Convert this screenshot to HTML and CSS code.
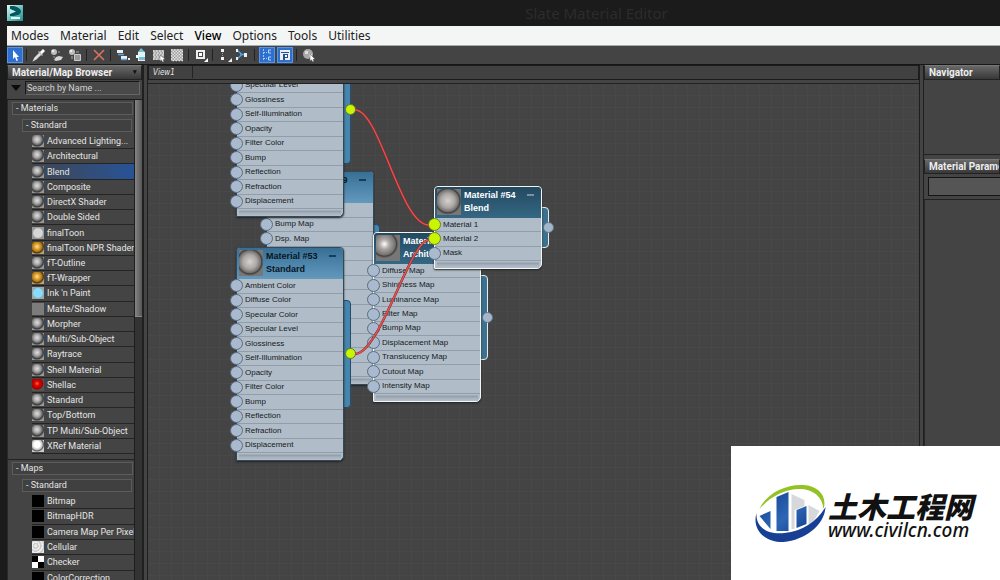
FILE: index.html
```html
<!DOCTYPE html>
<html lang="en">
<head>
<meta charset="utf-8">
<title>Slate Material Editor</title>
<link rel="stylesheet" href="styles.css">
</head>
<body>
<div class="window">
  <header class="titlebar">
    <svg class="app-icon" viewBox="0 0 16 16" aria-hidden="true">
      <defs><linearGradient id="app" x1="0" y1="0" x2="1" y2="1"><stop offset="0" stop-color="#e6fbf8"/><stop offset=".5" stop-color="#6cc6c2"/><stop offset="1" stop-color="#1c8f92"/></linearGradient></defs>
      <path fill="url(#app)" d="M0 0h16v16H0z"/><path fill="#07585e" d="M3 1h4q7 2 7 5.500T7 11H3V8.500l5-2L3 4z"/><path fill="#bdf0ec" d="M3 4l6 2.500L3 9z"/><path fill="#eafffd" d="M4 12h9v2H4z"/>
    </svg>
    <h1 class="window-title">Slate Material Editor</h1>
  </header>
  <nav class="menubar">
    <button>Modes</button><button>Material</button><button>Edit</button><button>Select</button><button class="strong">View</button><button>Options</button><button>Tools</button><button>Utilities</button>
  </nav>
  <div class="toolbar">
    <button class="tool on" aria-label="Select"><svg viewBox="0 0 16 16"><path fill="#fff" d="M6 3v9l2-2 1.500 4 1.500-.7L9.500 10H12z"/></svg></button>
    <i class="sep"></i>
    <button class="tool" aria-label="Pick material"><svg viewBox="0 0 16 16"><path stroke="#ddd" stroke-width="1.500" fill="none" d="M3 13l1-2 5-5 1 1-5 5z"/><path stroke="#fff" stroke-width="3" d="M9 7l4-4"/><path stroke="#bbb" stroke-width="1.500" d="M7.500 4.500l4 4"/></svg></button>
    <button class="tool" aria-label="Put material to scene"><svg viewBox="0 0 16 16"><circle cx="5" cy="5" r="3" fill="#bdbdbd"/><circle cx="4" cy="4" r="1" fill="#fff"/><path d="M9 5h2M5 9v2" stroke="#999"/><path fill="#d6d6d6" d="M7 10l3-1 4 1-2 3-5 1-2-1z"/></svg></button>
    <button class="tool" aria-label="Assign material to selection"><svg viewBox="0 0 16 16"><circle cx="5" cy="5" r="3" fill="#bdbdbd"/><circle cx="4" cy="4" r="1" fill="#fff"/><path d="M9 5h3M5 9v3" stroke="#aaa"/><path fill="#999" stroke="#ccc" d="M7.500 7.500h6v6h-6z"/></svg></button>
    <i class="sep"></i>
    <button class="tool" aria-label="Delete selected"><svg viewBox="0 0 16 16"><path stroke="#d9705f" stroke-width="1.700" d="M3 3l10 10M13 3L3 13"/></svg></button>
    <i class="sep"></i>
    <button class="tool" aria-label="Move children"><svg viewBox="0 0 16 16"><path fill="#eee" d="M2 3h6v3H2zM6 9h6v3H6zM13 11h2v2h-2z"/><path stroke="#5aa5e6" stroke-width="1.500" fill="none" d="M3 7.500h6M6 12.500h6"/></svg></button>
    <button class="tool" aria-label="Hide unused nodeslots"><svg viewBox="0 0 16 16"><path fill="#dff4f8" d="M5 5h7v9H5z"/><path fill="#78bed0" d="M8 1l4 4H5zM6 10h6v3H6z"/><path fill="#fff" d="M3 8h2v3H3z"/></svg></button>
    <button class="tool" aria-label="Show map in viewport"><svg viewBox="0 0 16 16"><path fill="#a5a5a5" d="M2 3h11v10H2z"/><path stroke="#e2e2e2" stroke-width="1.500" stroke-dasharray="1.500 1.500" d="M2 4h11M3 6h10M2 8h11M3 10h7M2 12h7"/><path fill="#fff" stroke="#555" stroke-width=".5" d="M9 8l5 4-2 .5 1 2-1.500.5-1-2L9 14z"/></svg></button>
    <button class="tool" aria-label="Show background"><svg viewBox="0 0 16 16"><path fill="#999" d="M2 2h12v12H2z"/><path stroke="#e6e6e6" stroke-width="1.300" stroke-dasharray="1.500 1.500" d="M2 3h12M3.500 4.500H14M2 6h12M3.500 7.500H14M2 9h12M3.500 10.500H14M2 12h12M3.500 13.500H14"/></svg></button>
    <i class="sep"></i>
    <button class="tool" aria-label="Material ID channel"><svg viewBox="0 0 16 16"><path fill="#eee" d="M3 3h9v9H3z"/><path fill="#444" d="M5 5h5v5H5z"/><path fill="#fff" d="M6 6h3v3H6zM15 11v4h-4z"/></svg></button>
    <i class="sep"></i>
    <button class="tool" aria-label="Lay out all"><svg viewBox="0 0 16 16"><path fill="#f2f2f2" d="M4 2h3v3H4zM4 10h3v3H4zM15 11v4h-4z"/><path stroke="#aaa" stroke-dasharray="1 1" d="M5.500 6v3"/></svg></button>
    <button class="tool" aria-label="Lay out children"><svg viewBox="0 0 16 16"><path stroke="#4c9fe0" stroke-width="1.500" fill="none" d="M2 3l5 4.500L2 12M5 7.500h5"/><path fill="#eee" d="M1 2h2v3H1zM1 10h2v3H1zM9 6h3v4H9z"/></svg></button>
    <i class="sep"></i>
    <button class="tool on" aria-label="Material/Map Browser"><svg viewBox="0 0 16 16"><path stroke="#9cc8ff" fill="none" stroke-dasharray="2 1" d="M4.500 2v11M4 5.500h4M4 11.500h4"/><path stroke="#b8d6fa" fill="none" d="M12 3H9.500v3H12M12 10H9.500v3H12"/></svg></button>
    <button class="tool on" aria-label="Parameter Editor"><svg viewBox="0 0 16 16"><path fill="#eee" d="M3 3h10v10H3z"/><path fill="#234f94" d="M4 5h8v1H4zM6 7h5v4H8v2H6z"/><path fill="#fff" d="M8 8h2v2H8z"/></svg></button>
    <i class="sep"></i>
    <button class="tool" aria-label="Select by material"><svg viewBox="0 0 16 16"><circle cx="7" cy="7" r="5" fill="#a9a9a9"/><path fill="#ddd" d="M4 4h3v3H4zM8 7h3v3H8z"/><path fill="#fff" stroke="#555" stroke-width=".5" d="M9 7l5 5-2 .3 1 2-1.500.5-1-2L9 14z"/></svg></button>
  </div>

  <div class="workspace">
    <aside class="browser">
      <h2 class="panel-head">Material/Map Browser<span class="close">▾</span></h2>
      <div class="search"><span class="arrow"></span><input type="text" aria-label="Search by Name" placeholder="Search by Name ..."></div>
      <div class="browser-body">
        <div class="tree">
          <section class="group">
            <h3 class="group-head">- Materials</h3>
            <h4 class="group-head sub">- Standard</h4>
            <ul class="items materials">
              <li><i class="ball"></i>Advanced Lighting...</li>
              <li><i class="ball"></i>Architectural</li>
              <li class="selected"><i class="ball"></i>Blend</li>
              <li><i class="ball"></i>Composite</li>
              <li><i class="ball"></i>DirectX Shader</li>
              <li><i class="ball"></i>Double Sided</li>
              <li><i class="ball pale"></i>finalToon</li>
              <li><i class="ball gold"></i>finalToon NPR Shader</li>
              <li><i class="ball"></i>fT-Outline</li>
              <li><i class="ball gold"></i>fT-Wrapper</li>
              <li><i class="ball cyan"></i>Ink 'n Paint</li>
              <li><i class="ball flat"></i>Matte/Shadow</li>
              <li><i class="ball"></i>Morpher</li>
              <li><i class="ball"></i>Multi/Sub-Object</li>
              <li><i class="ball"></i>Raytrace</li>
              <li><i class="ball"></i>Shell Material</li>
              <li><i class="ball red"></i>Shellac</li>
              <li><i class="ball"></i>Standard</li>
              <li><i class="ball"></i>Top/Bottom</li>
              <li><i class="ball"></i>TP Multi/Sub-Object</li>
              <li><i class="ball white"></i>XRef Material</li>
            </ul>
          </section>
          <section class="group">
            <h3 class="group-head">- Maps</h3>
            <h4 class="group-head sub">- Standard</h4>
            <ul class="items maps">
              <li><i class="ball black"></i>Bitmap</li>
              <li><i class="ball black"></i>BitmapHDR</li>
              <li><i class="ball black"></i>Camera Map Per Pixel</li>
              <li><i class="ball cells"></i>Cellular</li>
              <li><i class="ball checker"></i>Checker</li>
              <li><i class="ball black"></i>ColorCorrection</li>
            </ul>
          </section>
        </div>
        <div class="scroll"><div class="thumb"></div></div>
      </div>
    </aside>

    <main class="view">
      <div class="tabs"><button class="tab">View1</button></div>
      <div class="canvas">
        <article class="node n49">
          <div class="output tab49"></div>
          <div class="card">
            <header><i class="sample"></i><h5>Material #49</h5><b class="min"></b></header>
            <ul class="twelve"><li></li><li>Bump Map</li><li>Dsp. Map</li><li></li><li></li><li></li><li></li><li></li><li></li><li></li><li></li><li></li></ul>
            <footer></footer>
          </div>
        </article>
        <article class="node n52">
          <div class="output tall"><i class="dot live"></i></div>
          <div class="card">
            <header></header>
            <ul class="twelve"><li></li><li></li><li></li><li>Specular Level</li><li>Glossiness</li><li>Self-Illumination</li><li>Opacity</li><li>Filter Color</li><li>Bump</li><li>Reflection</li><li>Refraction</li><li>Displacement</li></ul>
            <footer></footer>
          </div>
        </article>
        <article class="node n53">
          <div class="output tall"><i class="dot live"></i></div>
          <div class="card">
            <header><i class="sample"></i><h5>Material #53<br>Standard</h5><b class="min"></b></header>
            <ul class="twelve"><li>Ambient Color</li><li>Diffuse Color</li><li>Specular Color</li><li>Specular Level</li><li>Glossiness</li><li>Self-Illumination</li><li>Opacity</li><li>Filter Color</li><li>Bump</li><li>Reflection</li><li>Refraction</li><li>Displacement</li></ul>
            <footer></footer>
          </div>
        </article>
        <article class="node picked arch">
          <div class="output"><i class="dot"></i></div>
          <div class="card">
            <header><i class="sample shiny"></i><h5>Material #50<br>Architectural</h5></header>
            <ul class="nine"><li>Diffuse Map</li><li>Shininess Map</li><li>Luminance Map</li><li>Filter Map</li><li>Bump Map</li><li>Displacement Map</li><li>Translucency Map</li><li>Cutout Map</li><li>Intensity Map</li></ul>
            <footer></footer>
          </div>
        </article>
        <article class="node picked blend">
          <div class="output"><i class="dot"></i></div>
          <div class="card">
            <header><i class="sample"></i><h5>Material #54<br>Blend</h5><b class="min"></b></header>
            <ul class="three"><li class="live">Material 1</li><li class="live">Material 2</li><li>Mask</li></ul>
            <footer></footer>
          </div>
        </article>
        <svg class="wires" width="420" height="330" viewBox="0 0 420 330" aria-hidden="true">
          <g fill="none"><path stroke="#802a2e" stroke-width="2.400" d="M207 26C232 26 252 141 281 141M207 270C232 270 262 156 281 156"/><path stroke="#e8504f" stroke-width="1.400" d="M207 26C232 26 252 141 281 141M207 270C232 270 262 156 281 156"/></g>
        </svg>
      </div>
    </main>

    <aside class="side">
      <h2 class="panel-head">Navigator</h2>
      <div class="navigator"></div>
      <h2 class="panel-head">Material Parameter Editor</h2>
      <div class="param-name"><input type="text" aria-label="Material name"></div>
      <div class="params"></div>
    </aside>
  </div>

  <div class="watermark">
    <svg class="logo" viewBox="0 0 70 58" aria-hidden="true">
      <defs><linearGradient id="blue" x1="0" y1="0" x2="1" y2="1"><stop offset="0" stop-color="#123e91"/><stop offset=".6" stop-color="#2d67b4"/><stop offset="1" stop-color="#153f92"/></linearGradient></defs>
      <path fill="#94c123" d="M4 25C11 9 31 0 48 1c15 1 24 11 20 24C67 13 58 5 44 5 29 5 14 13 4 25z"/>
      <path fill="#d6d8dc" d="M36 10l13 6v6l-10 4v19h-3zM53 21l11 6-8 14h-3z"/>
      <path fill="url(#blue)" d="M21 13l12-5v39H21zM41 26l10-4v18l-10 4zM4 32l11-5v18z"/>
      <path fill="#173f94" d="M1 29c-1 15 12 22 28 20 19-2 33-12 41-26-1 18-20 33-42 35C10 59-4 46 1 29z"/>
    </svg>
    <div class="brand"><strong>土木工程网</strong><a href="#">www.civilcn.com</a></div>
  </div>
</div>
</body>
</html>
```
FILE: styles.css
```css
* { box-sizing: border-box; }
body { margin: 0; background: #1b1b1b; color: #e4e4e4; font: 9px/12px Roboto, sans-serif; }
h1, h2, h3, h4, h5, ul { margin: 0; padding: 0; font-size: inherit; font-weight: normal; }
ul { list-style: none; }
button { border: 0; padding: 0; background: none; color: inherit; font: inherit; }
input { min-width: 0; border-radius: 0; }

.window { position: relative; display: flex; flex-direction: column; height: 100vh; padding-left: 7px; overflow: hidden; }
.titlebar { display: flex; align-items: center; flex: 0 0 26px; }
.app-icon { width: 16px; height: 16px; }
.window-title { flex: 1; padding-left: 170px; text-align: center; color: #2c2c2c; font: 15px/24px "Noto Sans", sans-serif; }
.menubar { display: flex; flex: 0 0 20px; gap: 11px; padding-left: 4px; background: #f4f6f6; border-bottom: 1px solid #aaa; color: #222; font: 12px/19px "Noto Sans", sans-serif; }
.menubar .strong { color: #000; font-weight: 500; }
.toolbar { display: flex; align-items: center; flex: 0 0 19px; gap: 2px; background: #444; border-bottom: 1px solid #171717; }
.tool { width: 16px; height: 16px; }
.tool svg { display: block; width: 16px; height: 16px; }
.tool.on { background: #2d70cf; box-shadow: inset 0 0 0 1px #5495e8; }
.sep { width: 2px; height: 12px; margin: 0 1px; border-left: 1px solid #222; }

.workspace { flex: 1; min-height: 0; display: grid; grid-template-columns: 137px minmax(0, 1fr) 77px; gap: 3px; background: #444; }
.panel-head { display: flex; flex: 0 0 15px; justify-content: space-between; padding: 0 4px; overflow: hidden; white-space: nowrap; background: linear-gradient(#686868, #383838); border: 1px solid #222; border-top-color: #777; color: #eee; font: bold 10px/13px Roboto, sans-serif; }
.close { color: #111; font-size: 7px; }

.browser { display: flex; flex-direction: column; min-height: 0; background: #444; border-right: 2px solid #202020; }
.search { display: flex; align-items: center; flex: 0 0 19px; gap: 4px; padding: 0 2px 4px 4px; }
.arrow { border: 5px solid transparent; border-top: 6px solid #0b0b0b; border-bottom: 0; }
.search input { flex: 1; height: 14px; padding: 0 1px; background: #494949; border: 1px solid #181818; border-right-color: #666; border-bottom-color: #666; color: #ddd; font: inherit; }
.search input::placeholder { color: #d4d4d4; opacity: 1; }
.browser-body { display: flex; flex: 1; min-height: 0; border-top: 1px solid #1c1c1c; }
.tree { flex: 1; min-width: 0; overflow: hidden; border-left: 1px solid #292929; }
.group { padding: 2px 1px 0 4px; border-bottom: 1px solid #222; }
.group-head { height: 13px; padding-left: 3px; border: 1px solid #5c5c5c; background: #404040; line-height: 11px; }
.group-head.sub { margin: 4px 1px 2px 10px; }
.items { display: grid; padding-left: 20px; }
.materials { min-height: 320px; margin-bottom: 5px; }
.maps { min-height: 92px; }
.items li { display: flex; align-items: center; gap: 3px; white-space: nowrap; border-bottom: 1px solid #242424; }
.items .selected { background: linear-gradient(90deg, #404650, #285397); }
.ball { width: 12px; height: 12px; flex: none; background: radial-gradient(circle at 42% 38%, #dedede 0, #aaa 30%, #727272 48%, #383838 62%, #999 76%); }
.ball.pale { background: radial-gradient(circle, #d6d6d6 0 50%, #999 65%); }
.ball.gold { background: radial-gradient(circle at 42% 38%, #ffe49b 0, #d69b2b 30%, #ae761b 48%, #4b3410 62%, #b6a378 76%); }
.ball.cyan { background: radial-gradient(circle, #85dcff 0 52%, #9aa 62%); }
.ball.flat { background: #7c7c7c; }
.ball.red { background: radial-gradient(circle at 42% 38%, #ff6a5a 0, #e00800 22%, #a30000 54%, #555 66%); }
.ball.white { background: radial-gradient(circle at 42% 38%, #fff 0 30%, #bbb 52%, #555 62%, #ccc 74%); }
.ball.black { background: #000; }
.ball.cells { background: repeating-radial-gradient(circle at 30% 40%, #eee 0 1px, #ccc 2px 3px); }
.ball.checker { background: conic-gradient(#fff 25%, #000 0 50%, #fff 0 75%, #000 0); }
.scroll { width: 8px; background: #333; border-left: 1px solid #1e1e1e; }
.thumb { height: 217px; background: linear-gradient(90deg, #858585, #555); border-bottom: 1px solid #888; }

.view { display: flex; flex-direction: column; min-width: 0; min-height: 0; border-left: 1px solid #202020; border-right: 1px solid #1e1e1e; }
.tabs { flex: 0 0 15px; background: #414141; border: 1px solid #1c1c1c; }
.tab { display: block; width: 44px; height: 12px; padding-left: 4px; text-align: left; border-right: 1px solid #222; font: italic 8px/11px "DejaVu Sans Condensed", sans-serif; }
.canvas { position: relative; flex: 1; min-height: 0; margin-top: 3px; overflow: hidden; border-top: 1px solid #222; background: repeating-linear-gradient(#0000 0 11px, #484848 11px 12px), repeating-linear-gradient(90deg, #0000 0 11px, #484848 11px 12px), #444; }

.node { position: absolute; width: 108px; color: #16191c; font: 8px/10px "Liberation Sans", Arial, sans-serif; }
.n49 { left: 118px; top: 87px; }
.n52 { left: 88px; top: -81px; }
.n53 { left: 88px; top: 163px; }
.arch { left: 225px; top: 148px; }
.blend { left: 286px; top: 102px; }
.card { position: relative; border: 1px solid #32495a; border-radius: 4px 4px 5px 1px; background: #b0bdc8; box-shadow: 0 1px 2px #222; }
.node header { display: flex; min-height: 31px; gap: 3px; padding: 2px 7px 1px 2px; background: linear-gradient(#376f94, #6499be); border-radius: 3px 3px 0 0; }
.node h5 { flex: 1; white-space: nowrap; color: #07141f; font: bold 9px/13px "Liberation Sans", Arial, sans-serif; }
.sample { width: 24px; height: 26px; flex: none; background: radial-gradient(circle at 45% 45%, #d5d3d0 0, #aaa7a4 7px, #73706e 11px, #404040 12px, #777 14px); }
.sample.shiny { background: radial-gradient(circle at 35% 35%, #fff 0, #aaa7a4 5px, #73706e 11px, #404040 12px, #777 14px); }
.min { width: 7px; height: 2px; margin-top: 5px; background: #173d59; }
.node ul { display: grid; }
.twelve { min-height: 174px; }
.nine { min-height: 130px; }
.three { min-height: 43px; }
.node li { display: flex; align-items: center; gap: 2px; border-bottom: 1px solid #919eaa; white-space: nowrap; }
.node li::before { content: ""; width: 11px; height: 11px; flex: none; margin-left: -7px; border: 1px solid #5a6c83; border-radius: 50%; background: #a9b9ce; }
.node li.live::before { background: #c8f500; border-color: #66802c; }
.node footer { height: 7px; margin: 0 2px; background: linear-gradient(#b0bdc8 0 1px, #919ca7 2px, #a5b0bc 4px, #b4c0cb); }
.output { position: absolute; left: 100px; top: 43px; bottom: 42px; width: 15px; border: 1px solid #254c68; border-radius: 4px; background: #4685ad; }
.output.tall { top: 53px; bottom: 53px; }
.output.tab49 { width: 14px; top: 53px; bottom: 53px; }
.dot { position: absolute; right: -6px; top: calc(50% - 6px); width: 11px; height: 11px; border: 1px solid #5b7591; border-radius: 50%; background: #a4b7c9; }
.dot.live { background: #c8f500; border-color: #637b27; }
.picked .card { border-color: #f2f5f6; }
.picked header { background: linear-gradient(#234960, #356783); }
.picked h5 { color: #fff; }
.picked .min { background: #7894a4; }
.picked .output { border-color: #e5edf1; background: #3d728f; }
.blend .output { top: 21px; bottom: 21px; }
.wires { position: absolute; left: 0; top: 0; }

.side { display: flex; flex-direction: column; min-width: 0; border-left: 1px solid #202020; }
.navigator { flex: 0 0 75px; margin-bottom: 4px; border-bottom: 1px solid #222; }
.param-name { display: flex; flex: 0 0 22px; padding: 3px 0 3px 4px; border-bottom: 1px solid #222; }
.param-name input { width: 100%; background: #555; border: 1px solid #141414; border-right: 0; }
.params { flex: 1; border-left: 1px solid #292929; }

.watermark { position: absolute; right: 0; bottom: 0; display: flex; align-items: center; gap: 2px; width: 269px; height: 134px; padding: 0 24px; background: #fff; }
.logo { width: 71px; height: 58px; flex: none; }
.brand { display: flex; flex-direction: column; padding-top: 4px; color: #111; white-space: nowrap; }
.brand strong { font: italic 900 29px/30px "Noto Sans CJK SC", sans-serif; }
.brand a { color: inherit; text-decoration: none; font: italic 500 19px/20px "Noto Sans", sans-serif; }
```
